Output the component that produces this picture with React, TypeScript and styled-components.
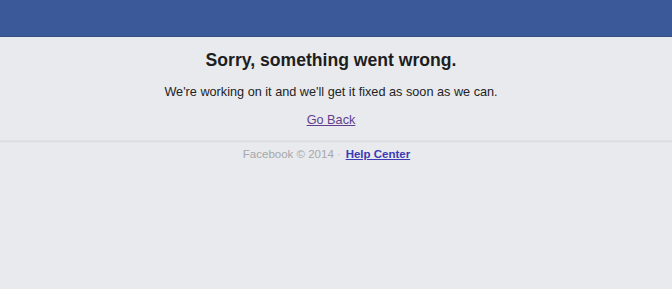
import React from "react";
import styled, { createGlobalStyle } from "styled-components";

const Global = createGlobalStyle`
  html, body { margin: 0; padding: 0; background: #e9eaed; }
  body { font-family: "Liberation Sans", Arial, sans-serif; }
`;

const Page = styled.div`
  min-height: 289px;
  background: #e9eaed;
`;

const Header = styled.div`
  height: 36px;
  background: #3b5998;
  border-bottom: 1px solid #344e86;
`;

const Main = styled.div`
  display: flex;
  flex-direction: column;
  align-items: center;
  padding: 12px 10px 13px 0;
  border-bottom: 1px solid #dcdee2;
  box-shadow: 0 1px 0 #e4e5e8, 0 -3px 0 -2px #e2e3e7 inset;
`;

const Title = styled.h2`
  margin: 0;
  font-size: 17.6px;
  line-height: 22px;
  font-weight: bold;
  color: #1c1e21;
`;

const Message = styled.p`
  margin: 13px 0 0;
  font-size: 12.7px;
  line-height: 16px;
  color: #222326;
`;

const Link = styled.a<{ $visited?: boolean; $bold?: boolean }>`
  color: ${(p) => (p.$visited ? "#5f3f8e" : "#3b3bb5")};
  font-weight: ${(p) => (p.$bold ? "bold" : "normal")};
  text-decoration: underline;
`;

const BackRow = styled.div`
  margin-top: 12px;
  font-size: 12.7px;
  line-height: 16px;
`;

const Footer = styled.div`
  text-align: center;
  padding: 5px 19px 0 0;
  font-size: 11.5px;
  line-height: 14px;
  color: #a5a7ab;
`;

const Dot = styled.span`
  margin: 0 5px 0 3px;
  color: #c4c6ca;
`;

export default function App() {
  return (
    <Page>
      <Global />
      <Header />
      <Main>
        <Title>Sorry, something went wrong.</Title>
        <Message>We're working on it and we'll get it fixed as soon as we can.</Message>
        <BackRow>
          <Link $visited href="#">Go Back</Link>
        </BackRow>
      </Main>
      <Footer>
        Facebook © 2014<Dot>·</Dot>
        <Link $bold href="#">Help Center</Link>
      </Footer>
    </Page>
  );
}
